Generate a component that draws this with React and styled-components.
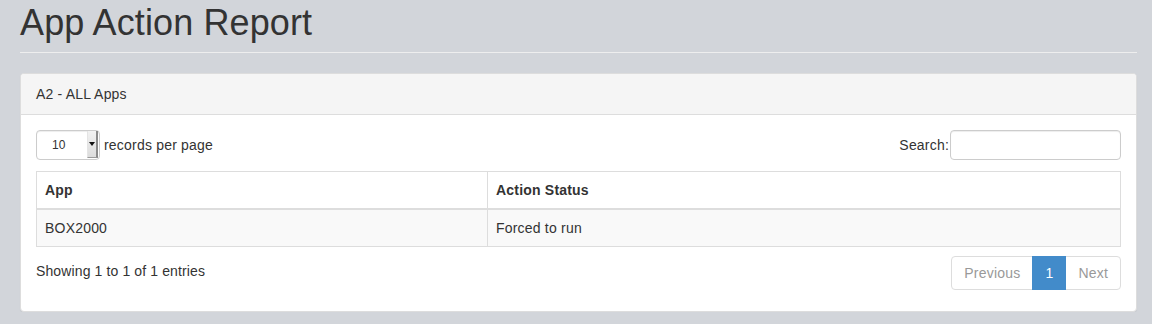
import React from 'react'
import styled, { createGlobalStyle } from 'styled-components'

const GlobalStyle = createGlobalStyle`
    * { box-sizing: border-box; }
    body {
        margin: 0;
        background: #d2d5da;
        font-family: "Liberation Sans", Arial, sans-serif;
        font-size: 14px;
        line-height: 20px;
        letter-spacing: 0.2px;
        color: #333;
    }
`

function App() {
    return (
        <Page>
            <GlobalStyle />
            <PageHeader>
                <Title>App Action Report</Title>
            </PageHeader>

            <Panel>
                <PanelHeading>A2 - ALL Apps</PanelHeading>
                <PanelBody>
                    <Controls>
                        <Length>
                            <SelectBox>
                                <SelectValue>10</SelectValue>
                                <SelectArrow>
                                    <svg width="6" height="4" viewBox="0 0 6 4">
                                        <path d="M0 0 L6 0 L3 4 Z" fill="#111" />
                                    </svg>
                                </SelectArrow>
                            </SelectBox>
                            <span>records per page</span>
                        </Length>
                        <Filter>
                            Search:
                            <SearchInput type="text" />
                        </Filter>
                    </Controls>

                    <Table>
                        <thead>
                            <tr>
                                <Th width="451">App</Th>
                                <Th>Action Status</Th>
                            </tr>
                        </thead>
                        <tbody>
                            <Tr striped>
                                <Td>BOX2000</Td>
                                <Td>Forced to run</Td>
                            </Tr>
                        </tbody>
                    </Table>

                    <Footer>
                        <Info>Showing 1 to 1 of 1 entries</Info>
                        <Pagination>
                            <PageItem disabled first>Previous</PageItem>
                            <PageItem active>1</PageItem>
                            <PageItem disabled last>Next</PageItem>
                        </Pagination>
                    </Footer>
                </PanelBody>
            </Panel>
        </Page>
    )
}

export default App

const Page = styled.div`
    padding: 3px 15px 0 20px;
`
const PageHeader = styled.div`
    padding-bottom: 9px;
    border-bottom: 1px solid #eee;
    margin-bottom: 20px;
`
const Title = styled.h1`
    margin: 0;
    font-size: 36px;
    line-height: 39.6px;
    font-weight: 500;
    letter-spacing: 0.12px;
    color: #333;
`
const Panel = styled.div`
    background: #fff;
    border: 1px solid #ddd;
    border-radius: 4px;
    box-shadow: 0 1px 1px rgba(0, 0, 0, 0.05);
`
const PanelHeading = styled.div`
    padding: 10px 15px;
    background: #f5f5f5;
    border-bottom: 1px solid #ddd;
    border-radius: 3px 3px 0 0;
`
const PanelBody = styled.div`
    padding: 15px 15px 21px;
`
const Controls = styled.div`
    display: flex;
    justify-content: space-between;
    align-items: center;
    height: 30px;
    margin-bottom: 11px;
`
const Length = styled.div`
    display: flex;
    align-items: center;
    gap: 4px;
`
const SelectBox = styled.div`
    display: flex;
    align-items: center;
    justify-content: space-between;
    width: 64px;
    height: 30px;
    border: 1px solid #ccc;
    border-radius: 4px;
    padding: 0 1px 0 15px;
    box-shadow: inset 0 1px 1px rgba(0, 0, 0, 0.075);
    background: #fff;
`
const SelectValue = styled.span`
    font-size: 12px;
    letter-spacing: 0;
`
const SelectArrow = styled.span`
    display: flex;
    align-items: center;
    justify-content: center;
    width: 11px;
    height: 27px;
    background: linear-gradient(#f2f2f2, #dcdcdc);
    border-right: 2px solid #8a8a8a;
    border-bottom: 1px solid #9a9a9a;
    border-left: 1px solid #e4e4e4;
`
const Filter = styled.label`
    display: flex;
    align-items: center;
`
const SearchInput = styled.input`
    width: 171px;
    height: 30px;
    margin-left: 1px;
    border: 1px solid #ccc;
    border-radius: 4px;
    box-shadow: inset 0 1px 1px rgba(0, 0, 0, 0.075);
    outline: none;
    padding: 5px 10px;
    font: inherit;
`
const Table = styled.table`
    width: 100%;
    border-collapse: collapse;
    border: 1px solid #ddd;
`
const Th = styled.th`
    text-align: left;
    padding: 8px;
    font-weight: bold;
    border: 1px solid #ddd;
    border-bottom-width: 2px;
`
const Tr = styled.tr`
    background: ${props => props.striped ? '#f9f9f9' : '#fff'};
`
const Td = styled.td`
    padding: 8px;
    border: 1px solid #ddd;
`
const Footer = styled.div`
    display: flex;
    justify-content: space-between;
    align-items: flex-start;
    margin-top: 9px;
`
const Info = styled.div`
    padding-top: 5px;
    letter-spacing: 0.12px;
`
const Pagination = styled.div`
    display: flex;
`
const PageItem = styled.span`
    padding: 6px 12px;
    line-height: 20px;
    border: 1px solid ${props => props.active ? '#428bca' : '#ddd'};
    margin-left: ${props => props.first ? '0' : '-1px'};
    background: ${props => props.active ? '#428bca' : '#fff'};
    color: ${props => props.active ? '#fff' : '#999'};
    border-radius: ${props => props.first ? '4px 0 0 4px' : props.last ? '0 4px 4px 0' : '0'};
    position: ${props => props.active ? 'relative' : 'static'};
    z-index: ${props => props.active ? 2 : 'auto'};
`
